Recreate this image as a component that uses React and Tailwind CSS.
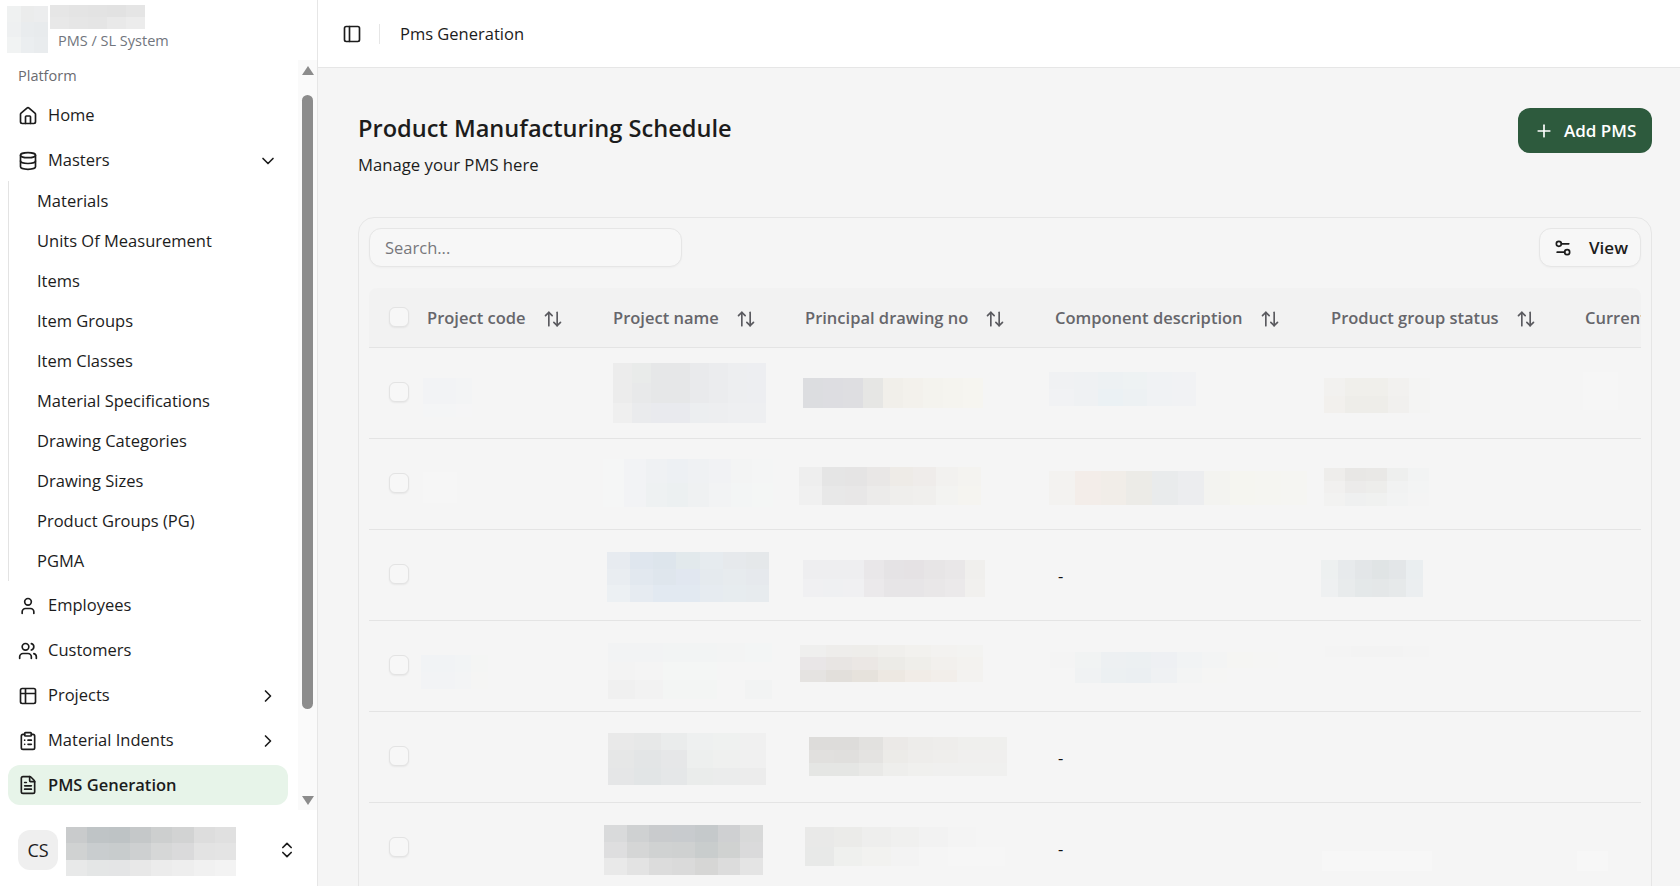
import {
  ArrowUpDown,
  ChevronDown,
  ChevronRight,
  ChevronsUpDown,
  ClipboardList,
  Database,
  FileText,
  House,
  PanelLeft,
  Plus,
  Settings2,
  Table2,
  User,
  Users,
} from "lucide-react";

const font = { fontFamily: '"Open Sans", "Noto Sans", sans-serif' };

const subItems = [
  "Materials",
  "Units Of Measurement",
  "Items",
  "Item Groups",
  "Item Classes",
  "Material Specifications",
  "Drawing Categories",
  "Drawing Sizes",
  "Product Groups (PG)",
  "PGMA",
];

const columns = [
  "Project code",
  "Project name",
  "Principal drawing no",
  "Component description",
  "Product group status",
];

// redacted cells: [left, top, width, height, "colour rows"]
const rows = [
  [
    [6, 30, 49, 39, "f2f3f5 f2f3f5 f3f4f5|f2f3f5 f2f3f5 f3f4f5|f4f5f6 f4f5f6 f5f5f6"],
    [10, 15, 153, 60, "ececec e9ebea e6e7e8 e6e7e8 e9eaec ebecee edeef0 edeef1|ececec e8e9ea e6e7e8 e6e7e8 e9eaec ebecee edeef0 edeef1|efefef eaebed e9eaee e9eaee eceef0 edeef0 eeeff1 eeeff1"],
    [8, 30, 180, 30, "dcdde0 dddde1 dedee1 e6e6e4 f1efea f3f1ec f4f3ee f5f4ef f6f5f0"],
    [4, 24, 147, 34, "f0f1f3 eff1f3 edf1f3 eef2f3 f0f2f4 f1f2f4|f1f2f4 eff1f3 ebf1f4 edf1f3 f0f2f4 f1f2f4"],
    [3, 30, 106, 35, "f2f1ef f0efeb f0efeb f2f1ef f4f4f3|f2f0ed eeede9 eeede9 f1f0ee f4f4f3"],
    [8, 24, 35, 38, "f6f6f6 f6f6f6|f6f6f6 f6f6f6"],
  ],
  [
    [6, 33, 34, 31, "f6f6f6 f6f6f6"],
    [0, 20, 170, 48, "f5f6f6 f2f3f5 eff1f3 edf0f3 eff1f3 f1f2f4 f3f4f4 f4f5f5|f5f6f6 f2f3f5 eef1f2 ecf0f1 eff1f2 f2f3f4 f3f5f5 f4f6f5"],
    [4, 28, 182, 38, "eeeeee e5e5e5 e5e4e4 e9e7e6 eeebe7 efecea f2f1ef f4f3f0|f0f0f0 e8e8e8 e8e7e7 ecebea efeeec f0efed f3f3f1 f5f4f0"],
    [4, 32, 258, 34, "f3f2f0 f3ede9 f1ede8 ecebe7 e9ebec ecedef f3f3f0 f5f5f0 f5f5f1 f5f5f2"],
    [3, 29, 105, 38, "eeedeb e8e7e5 e9e8e6 eeefee f2f3f3|f1f0ef ecebea ededeb f1f2f2 f3f4f4|f2f2f1 eff0f0 f0f1f0 f2f3f3 f4f4f4"],
  ],
  [
    null,
    [4, 22, 162, 50, "e7ebf0 dfe6ee dde5ec e2e9ec e6ebef e6e9ec e5e8ea|e9edf1 e2e8ef dfe6ed e1e7f0 e5eaee e7ebee e6e9ed|ecf0f3 e6ebf1 e2e9f1 e2e9f1 e6ebf0 e7ecef e7ebee"],
    [8, 30, 182, 37, "eeeef0 eeeef0 eeeef0 e9e7e9 e5e3e5 e5e2e4 e7e5e6 e9e7e8 f0efed|f0f0f2 eff0f2 f0f0f2 ebe9eb e7e5e7 e7e5e7 e9e7e8 ebe9ea f1f0ee"],
    "-",
    [0, 30, 102, 37, "edf0f0 e7eaec e3e6e8 e0e4e5 e3e6e8 eaeef0|eef0f1 e8ebec e4e8e9 e4e7e8 e6e9ea ebeef0"],
  ],
  [
    [4, 34, 67, 34, "f1f3f5 f1f3f5 f2f4f5 f4f5f4|f2f3f5 f2f3f5 f3f4f5 f5f5f4"],
    [5, 22, 164, 56, "f2f3f4 f2f3f4 f2f4f4 f2f4f4 f3f4f4 f3f5f5|f3f3f3 f4f4f4 f4f6f5 f4f6f5 f5f5f5 f5f5f5|f0f0f0 f2f2f2 f3f5f4 f3f5f4 f5f5f5 f2f3f3"],
    [5, 24, 183, 37, "efefee eeedeb eeedea f0efec f2f1ee f3f2f0 f3f3f1|e9e6e7 e8e5e3 ebe7e4 ecebe7 efeeea f2f0ed f3f2ef|e5e3e1 e2dfdb e6e2dc ede8e2 f1ece7 f2eeea f3f2f0"],
    [5, 31, 228, 31, "f4f4f4 f1f3f3 edf0f2 ecf0f2 eef0f3 f1f3f4 f3f4f4 f5f5f3 f5f5f4|f5f5f5 f0f2f3 ecf0f2 ebeff2 eff1f3 f3f4f4 f5f5f4 f5f5f5 f5f5f5"],
    [4, 25, 104, 11, "f4f4f4 f3f3f3 f3f3f3 f4f4f4"],
  ],
  [
    [1, 28, 72, 34, "f5f5f5 f5f5f5 f5f5f5 f5f5f5"],
    [5, 21, 158, 52, "e9e9e9 e7e8e8 eaecec eef0f0 eff1f0 f0f0f0|e6e7e7 e3e5e6 e6e7e8 edefee eff0ef f0f0f0|e5e6e7 e2e5e6 e5e7e8 eaeceb ebecec ececec"],
    [14, 25, 198, 39, "dddcda dddcda e2e1df ebe9e7 edecea eeedeb efefed efefed|e1e0de e0dfdd e4e3e1 ecebe8 eeedeb efeeec f0efee f0efee|e5e6e4 e5e6e4 e9e9e7 eeeeec f0f0ee f0f0ef f0f0ef f0f0ef"],
    "-",
  ],
  [
    null,
    [1, 22, 159, 50, "d9dadb cfd1d2 c9cbcd c8cbce c5c9cb cfd0d2 d8d9d9|dededf d5d6d6 d0d2d2 cfd1d1 c9cdcd d0d2d1 dadadb|e9e9e9 e3e3e3 dcdcdc dadada d6d6d5 dcdcdc e4e4e4"],
    [10, 24, 200, 39, "e9e9e8 ebebe9 eeeeed f0f0ef f2f2f2 f4f4f4 f5f5f5|e8e9e8 eff0ee f2f2f0 f3f3f3 f5f5f5 f6f6f6 f6f6f6"],
    "-",
    [1, 48, 110, 20, "f7f7f7"],
    [2, 48, 31, 20, "f7f7f7"],
  ],
];

// Pixelated stand-in for text that was blurred out of the screenshot
function Redacted({ spec, className = "" }) {
  const [left, top, width, height, colors] = spec;
  return (
    <div className={`flex flex-col ${className}`} style={{ marginLeft: left, marginTop: top, width, height }}>
      {colors.split("|").map((line, i) => (
        <div key={i} className="flex flex-1">
          {line.split(" ").map((c, j) => (
            <div key={j} className="flex-1" style={{ backgroundColor: `#${c}` }} />
          ))}
        </div>
      ))}
    </div>
  );
}

function NavItem({ icon: Icon, label, chevron: Chevron }) {
  return (
    <div className="flex h-[45px] items-center pl-[18px] pr-[20px] text-[#1c1c1c]">
      <Icon size={20} strokeWidth={2} className="shrink-0" />
      <span className="ml-[10px] flex-1">{label}</span>
      {Chevron && <Chevron size={20} strokeWidth={2} />}
    </div>
  );
}

function Checkbox() {
  return <div className="-mt-[2px] h-[20px] w-[20px] rounded-md border border-[#e3e3e3] bg-[#f7f7f7] shadow-[0_1px_2px_rgba(0,0,0,0.06)]" />;
}

function Sidebar() {
  return (
    <aside className="flex h-full w-[318px] shrink-0 flex-col border-r border-[#e6e6e6] bg-white">
      <div className="flex h-[60px] shrink-0 pl-[7px] pt-[5px]">
        <Redacted spec={[0, 1, 41, 47, "eff1f1 ebecec ecedee|eef0f1 e9ecee e8ebed|f1f3f3 ebeef0 e9ecee"]} />
        <div className="ml-[2px] flex flex-col">
          <Redacted spec={[0, 0, 95, 24, "e6e6e6 e4e4e4 e3e3e3 e2e2e2 e5e5e5|e8e8e8 e6e6e6 e5e5e5 e9e9e9 ececec"]} />
          <span className="ml-[8px] mt-[2px] text-[14.5px] leading-[20px] text-[#71757d]">PMS / SL System</span>
        </div>
      </div>

      <div className="flex min-h-0 flex-1">
        <nav className="w-[298px] overflow-hidden pt-[6px]">
          <div className="mb-[7px] h-5 pl-[18px] text-[14.5px] font-medium leading-5 text-[#6b6b70]">Platform</div>
          <NavItem icon={House} label="Home" />
          <NavItem icon={Database} label="Masters" chevron={ChevronDown} />
          <div className="ml-2 -mt-[2px] mb-[2px] border-l border-[#e3e3e3] pl-7 text-[#1c1c1c]">
            {subItems.map((item) => (
              <div key={item} className="flex h-10 items-center">{item}</div>
            ))}
          </div>
          <NavItem icon={User} label="Employees" />
          <NavItem icon={Users} label="Customers" />
          <NavItem icon={Table2} label="Projects" chevron={ChevronRight} />
          <NavItem icon={ClipboardList} label="Material Indents" chevron={ChevronRight} />
          <div className="ml-2 mt-[2px] flex h-10 w-[280px] items-center rounded-xl bg-[#e7f4e9] pl-[10px] font-semibold text-[#1c1c1c]">
            <FileText size={20} strokeWidth={2} />
            <span className="ml-[10px]">PMS Generation</span>
          </div>
        </nav>

        <div className="flex w-[19px] shrink-0 flex-col items-center bg-[#fafafa]">
          <div className="mt-[6px] h-0 w-0 border-x-[6.5px] border-b-[9px] border-x-transparent border-b-[#8c8c8c]" />
          <div className="mt-[20px] h-[614px] w-[11px] rounded-full bg-[#8c8c8c]" />
          <div className="mt-[87px] h-0 w-0 border-x-[6.5px] border-t-[9px] border-x-transparent border-t-[#8c8c8c]" />
        </div>
      </div>

      <div className="flex h-[76px] shrink-0 items-start pl-[18px]">
        <div className="mt-[20px] flex h-10 w-10 items-center justify-center rounded-xl bg-[#efefef] text-[18px] text-[#1c1c1c]">CS</div>
        <Redacted spec={[8, 17, 170, 49, "c9cbcc bfc4c6 bec3c5 c5c8c9 cdcfcf d2d3d3 dddddd e0e0e0|d0d2d2 c9cdcf c8cccd ced0d1 d6d7d7 dadadb e3e3e3 e4e4e4|e8e9e9 e4e6e6 e4e5e6 e8e8e8 ececec eeeeee f1f1f1 f3f3f3"]} />
        <ChevronsUpDown size={20} strokeWidth={2} className="ml-[41px] mt-[30px] text-[#1c1c1c]" />
      </div>
    </aside>
  );
}

function DataTable() {
  return (
    <div className="rounded-t-2xl border border-[#e6e6e6] p-[10px]">
      <div className="mb-[21px] flex h-[39px] justify-between">
        <div className="flex w-[313px] items-center rounded-xl border border-[#e6e6e6] bg-[#f7f7f7] pl-[15px] pt-[2px] text-[#77777c] shadow-[0_1px_2px_rgba(0,0,0,0.03)]">
          Search...
        </div>
        <div className="flex w-[102px] items-center rounded-xl border border-[#e6e6e6] bg-[#f7f7f7] pl-[13px] text-[17px] font-semibold text-[#1c1c1c] shadow-[0_1px_2px_rgba(0,0,0,0.03)]">
          <Settings2 size={20} strokeWidth={2} />
          <span className="ml-[16px] pt-px">View</span>
        </div>
      </div>

      <div className="overflow-hidden">
        <div className="grid h-[60px] grid-cols-[48px_186px_192px_250px_276px_254px_minmax(0,1fr)] items-center rounded-t-lg border-b border-[#e4e4e4] bg-[#f2f2f2] font-semibold text-[#66666b]">
          <div className="pl-5">
            <Checkbox />
          </div>
          {columns.map((col) => (
            <div key={col} className="flex items-center pl-[10px] pt-[2px]">
              <span className="whitespace-nowrap">{col}</span>
              <ArrowUpDown size={20} strokeWidth={2} className="ml-[17px] shrink-0 text-[#5a5a5f]" />
            </div>
          ))}
          <div className="overflow-hidden whitespace-nowrap pl-[10px] pt-[2px]">Current stage</div>
        </div>

        {rows.map((cells, r) => (
          <div key={r} className="grid h-[91px] grid-cols-[48px_186px_192px_250px_276px_254px_minmax(0,1fr)] border-b border-[#e4e4e4]">
            <div className="flex items-center pl-5">
              <Checkbox />
            </div>
            {cells.map((cell, c) =>
              cell === "-" ? (
                <div key={c} className="flex items-center pl-[13px] pt-[2px] text-[#111]">-</div>
              ) : (
                <div key={c}>{cell && <Redacted spec={cell} />}</div>
              )
            )}
          </div>
        ))}
      </div>
    </div>
  );
}

export default function App() {
  return (
    <div className="flex h-screen overflow-hidden bg-[#f5f5f5] text-[16.5px]" style={font}>
      <Sidebar />

      <div className="flex min-w-0 flex-1 flex-col">
        <header className="flex h-[68px] shrink-0 items-center border-b border-[#e6e6e6] bg-white pl-6 text-[#1c1c1c]">
          <PanelLeft size={20} strokeWidth={2} />
          <div className="ml-[17px] h-5 w-px bg-[#e6e6e6]" />
          <span className="ml-[20px] pt-px">Pms Generation</span>
        </header>

        <main className="min-h-0 flex-1 pl-10 pr-7 pt-10">
          <div className="mb-10 flex items-start justify-between">
            <div>
              <h1 className="text-[23.6px] font-semibold leading-10 text-[#1c1c1c]">Product Manufacturing Schedule</h1>
              <p className="mt-[5px] text-[16.7px] leading-6 text-[#1c1c1c]">Manage your PMS here</p>
            </div>
            <button className="flex h-[45px] w-[134px] items-center rounded-xl bg-[#2d5a3d] pl-[16px] text-[17px] font-semibold text-white">
              <Plus size={20} strokeWidth={2} />
              <span className="ml-[10px] pt-px">Add PMS</span>
            </button>
          </div>
          <DataTable />
        </main>
      </div>
    </div>
  );
}
